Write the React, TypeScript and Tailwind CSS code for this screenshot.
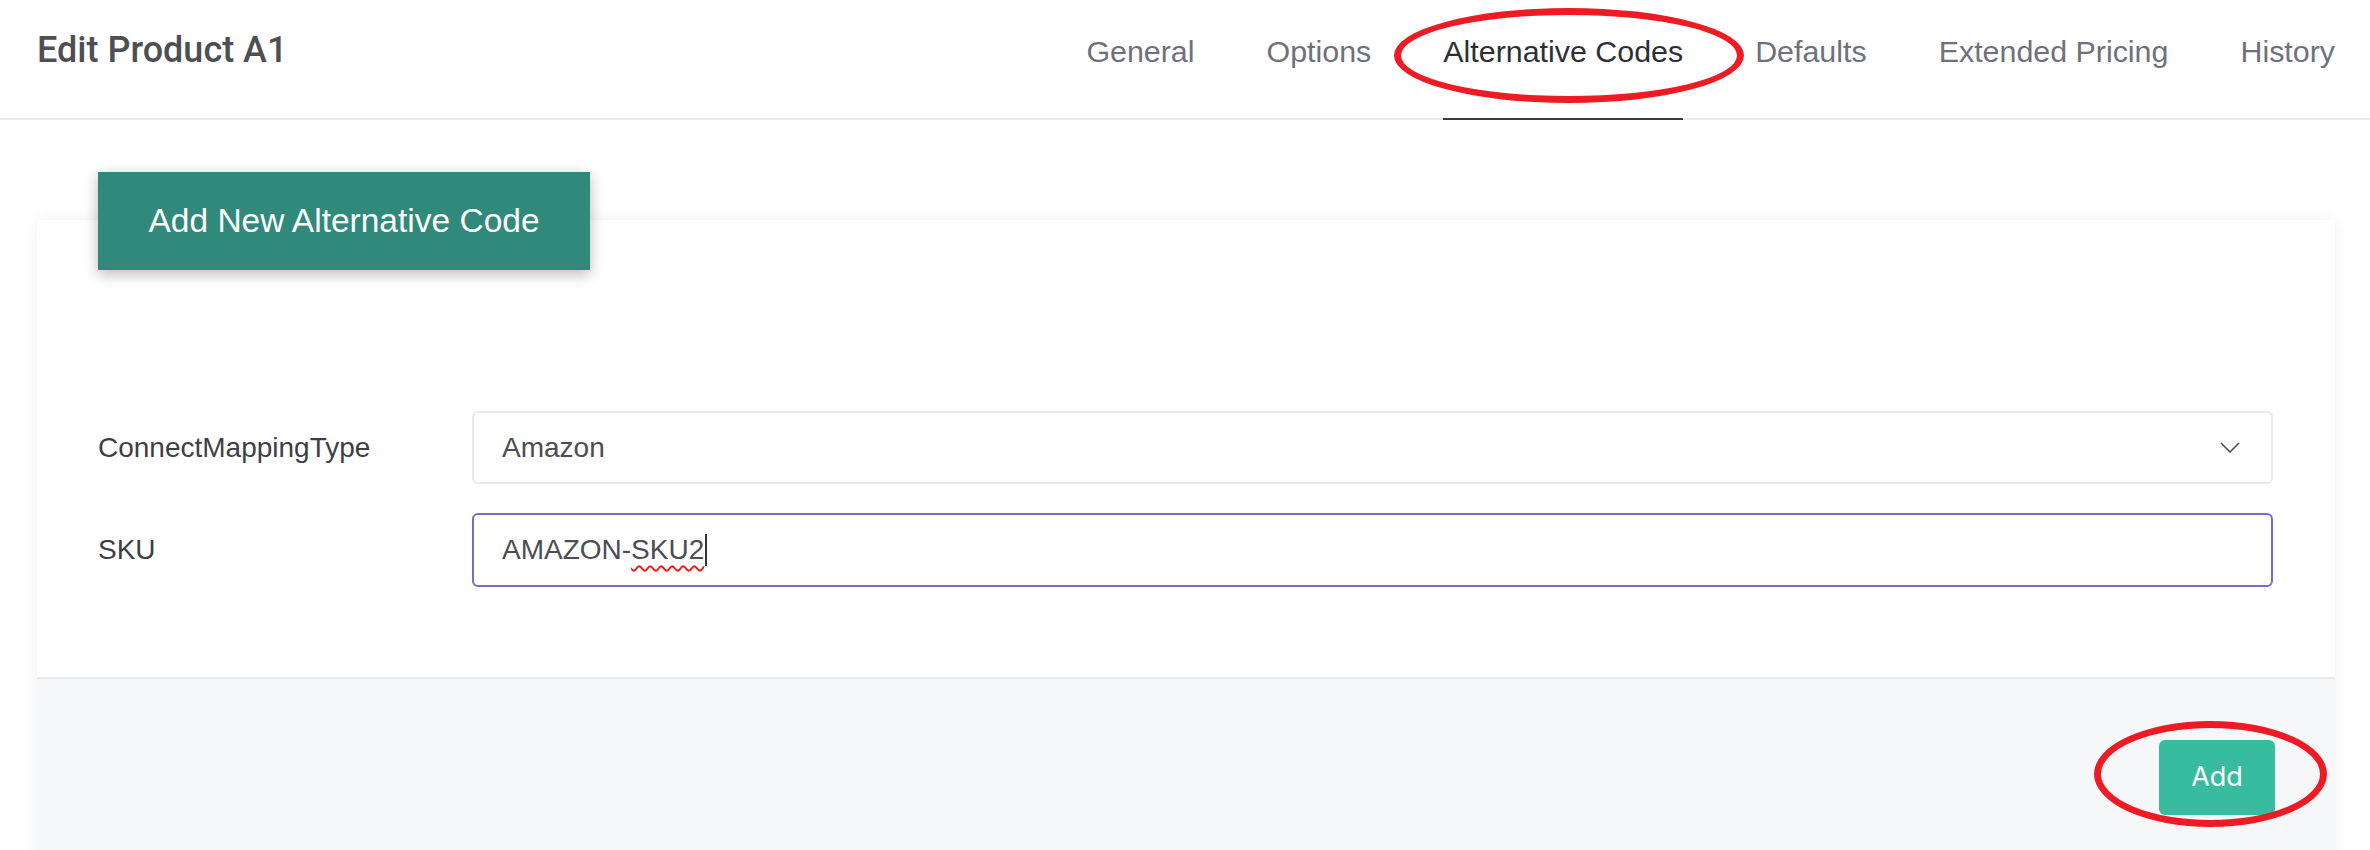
const tabs = [
  "General",
  "Options",
  "Alternative Codes",
  "Defaults",
  "Extended Pricing",
  "History",
];

function ChevronDown() {
  return (
    <svg width="20" height="11" viewBox="0 0 20 11" fill="none" className="text-[#4f5157]">
      <polyline points="1,1 10,10 19,1" stroke="currentColor" strokeWidth="1.6" />
    </svg>
  );
}

export default function App() {
  return (
    <div className="relative h-[850px] overflow-hidden bg-white font-['Liberation_Sans',Arial,sans-serif]">
      {/* header */}
      <header className="flex h-[120px] justify-between border-b-2 border-[#e9e9ef]">
        <h1 className="pl-[37px] pt-[32px] font-['Roboto',sans-serif] text-[36px] leading-[36px] font-medium text-[#4d4f55]">
          Edit Product A1
        </h1>
        <nav className="-mb-[2px] flex">
          {tabs.map((t, i) => {
            const active = t === "Alternative Codes";
            return (
              <a
                key={t}
                className={
                  "ml-[36px] pt-[34px] text-[30.4px] leading-[34px] " +
                  (i === tabs.length - 1 ? "mr-[35px] " : "mr-[36px] ") +
                  (active
                    ? "border-b-2 border-[#3b3c42] text-[#2d2f36]"
                    : "border-b-2 border-transparent text-[#6e717c]")
                }
              >
                {t}
              </a>
            );
          })}
        </nav>
      </header>

      {/* card */}
      <div className="ml-[37px] mr-[35px] mt-[100px] bg-white shadow-[0_0_16px_rgba(0,0,0,0.06)]">
        <div className="flex flex-col items-start pl-[61px] pr-[62px] pb-[90px]">
          <button className="-mt-[48px] h-[98px] w-[492px] bg-[#30897a] text-[33.5px] text-white shadow-[0_4px_14px_rgba(0,0,0,0.28)]">
            Add New Alternative Code
          </button>

          <div className="mt-[141px] grid w-full grid-cols-[374px_1fr] items-center gap-y-[29px] text-[28px] text-[#4b4d53]">
            <label className="text-[#3d3f45]">ConnectMappingType</label>
            <div className="flex h-[73px] items-center justify-between rounded-[6px] border-2 border-[#e8e8ef] pl-[28px] pr-[31px]">
              <span>Amazon</span>
              <ChevronDown />
            </div>

            <label className="text-[#3d3f45]">SKU</label>
            <div className="flex h-[74px] items-center rounded-[6px] border-2 border-[#726dc6] pl-[28px]">
              <span>AMAZON-</span>
              <span className="underline decoration-wavy decoration-[#ff1010] decoration-[1.5px] underline-offset-[6px]">
                SKU2
              </span>
              <span className="ml-px h-[32px] w-[2px] bg-[#333]" />
            </div>
          </div>
        </div>

        {/* footer */}
        <div className="flex justify-end border-t-2 border-[#e8e9ee] bg-[#f6f7f9] pt-[61px] pr-[60px] pb-[62px]">
          <button className="h-[75px] w-[116px] rounded-[6px] bg-[#38bca0] font-['Inter',sans-serif] text-[27px] text-white">
            Add
          </button>
        </div>
      </div>

      {/* red annotation marks */}
      <div className="absolute left-[1394px] top-[8px] h-[95px] w-[350px] rounded-[50%] border-[7px] border-[#ed1c24]" />
      <div className="absolute left-[2094px] top-[721px] h-[106px] w-[233px] rounded-[50%] border-[7px] border-[#ed1c24]" />
    </div>
  );
}
